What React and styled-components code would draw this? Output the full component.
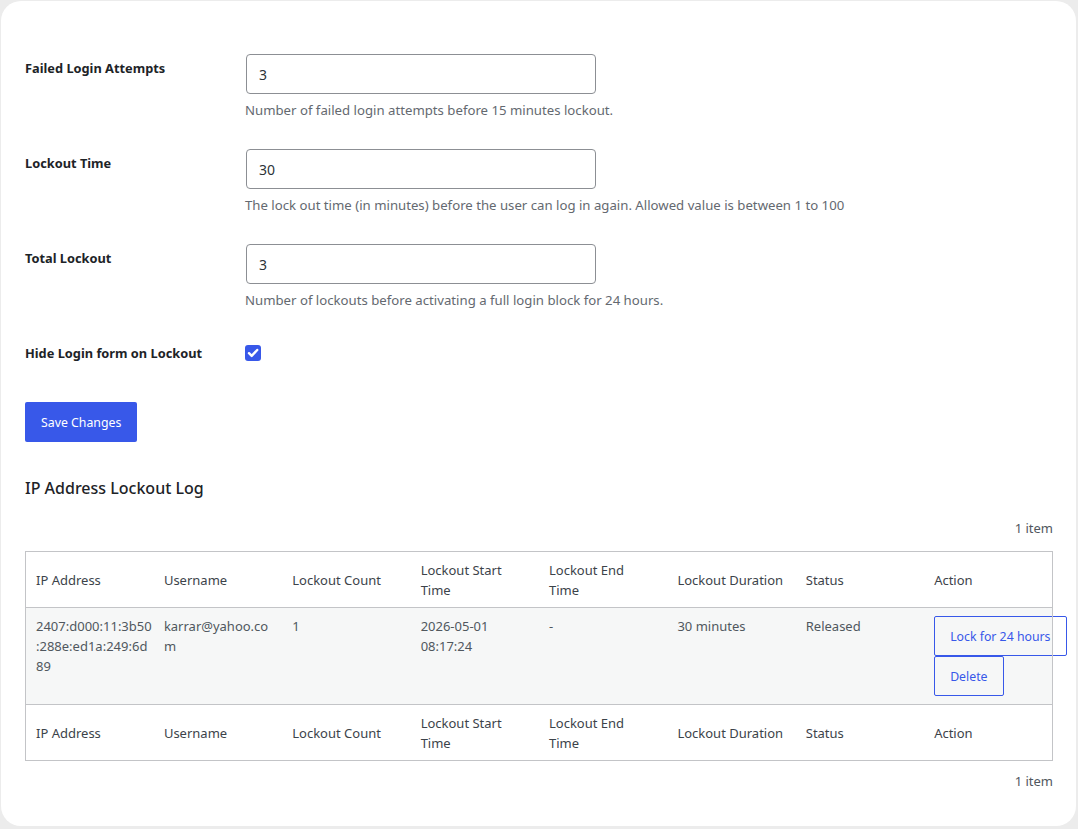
import React from 'react';
import styled, { createGlobalStyle } from 'styled-components';

const GlobalStyle = createGlobalStyle`
  html, body {
    margin: 0;
    padding: 0;
    background: #ececec;
  }
  body {
    font-family: "Noto Sans", "Open Sans", sans-serif;
    font-size: 13px;
    color: #3c434a;
  }
  * {
    box-sizing: border-box;
  }
`;

const Page = styled.div`
  padding: 1px 2px 3px 1px;
`;

const Card = styled.div`
  background: #fff;
  border-radius: 20px;
  height: 825px;
  padding: 53px 23px 0 24px;
  display: flex;
  flex-direction: column;
`;

const FieldRow = styled.div`
  display: grid;
  grid-template-columns: 221px 1fr;
  margin-bottom: ${(p) => (p.$last ? '40px' : '29px')};
`;

const Label = styled.label`
  margin-top: 6px;
  font-weight: 700;
  font-size: 12.8px;
  line-height: 17px;
  color: #1d2327;
`;

const Field = styled.div`
  display: flex;
  flex-direction: column;
  align-items: flex-start;
`;

const TextInput = styled.input`
  width: 350px;
  height: 40px;
  border: 1px solid #8c8f94;
  border-radius: 4px;
  padding: 0 12px;
  font-family: inherit;
  font-size: 14px;
  color: #2c3338;
  background: #fff;
  outline: none;
`;

const Hint = styled.p`
  margin: 6px 0 0 -1px;
  font-size: 13.2px;
  line-height: 20px;
  color: #646970;
`;

const CheckBox = styled.span`
  margin: 6px 0 0 -1px;
  width: 16px;
  height: 16px;
  border-radius: 3px;
  background: #3858e9;
  display: flex;
  align-items: center;
  justify-content: center;
`;

const PrimaryButton = styled.button`
  align-self: flex-start;
  height: 40px;
  padding: 0 16px;
  background: #3858e9;
  color: #fff;
  border: none;
  border-radius: 2px;
  font-family: inherit;
  font-size: 12.3px;
  cursor: pointer;
`;

const Heading = styled.h2`
  margin: 35px 0 0;
  font-size: 16px;
  line-height: 22px;
  font-weight: 500;
  color: #1d2327;
`;

const ItemCount = styled.div`
  text-align: right;
  line-height: 20px;
  color: #50575e;
  margin: ${(p) => (p.$bottom ? '10px 0 0' : '19px 0 13px')};
`;

const Table = styled.table`
  width: 100%;
  table-layout: fixed;
  border-collapse: collapse;
  border: 1px solid #c3c4c7;
`;

const HeadRow = styled.tr`
  border-${(p) => (p.$foot ? 'top' : 'bottom')}: 1px solid #c3c4c7;
`;

const HeadCell = styled.th`
  text-align: left;
  font-weight: 400;
  padding: 8px 10px 7px;
  line-height: 20px;
  height: 55px;
  color: #3c434a;
  vertical-align: middle;
`;

const BodyRow = styled.tr`
  background: #f6f7f7;
`;

const Cell = styled.td`
  padding: 8px 10px;
  line-height: 20px;
  color: #50575e;
  vertical-align: top;
  overflow-wrap: anywhere;
  white-space: ${(p) => (p.$pre ? 'pre' : 'normal')};
`;

const ActionButton = styled.button`
  display: block;
  height: 40px;
  padding: 0 15px;
  white-space: nowrap;
  background: transparent;
  color: #3858e9;
  border: 1px solid #3858e9;
  border-radius: 2px;
  font-family: inherit;
  font-size: 12.3px;
  cursor: pointer;
`;

const columns = [
  'IP Address',
  'Username',
  'Lockout Count',
  'Lockout Start Time',
  'Lockout End Time',
  'Lockout Duration',
  'Status',
  'Action',
];

const fields = [
  {
    label: 'Failed Login Attempts',
    value: '3',
    hint: 'Number of failed login attempts before 15 minutes lockout.',
  },
  {
    label: 'Lockout Time',
    value: '30',
    hint: 'The lock out time (in minutes) before the user can log in again. Allowed value is between 1 to 100',
  },
  {
    label: 'Total Lockout',
    value: '3',
    hint: 'Number of lockouts before activating a full login block for 24 hours.',
  },
];

function Columns({ foot }) {
  return (
    <HeadRow $foot={foot}>
      {columns.map((c) => (
        <HeadCell key={c}>{c}</HeadCell>
      ))}
    </HeadRow>
  );
}

export default function App() {
  return (
    <Page>
      <GlobalStyle />
      <Card>
        {fields.map((f) => (
          <FieldRow key={f.label}>
            <Label>{f.label}</Label>
            <Field>
              <TextInput defaultValue={f.value} />
              <Hint>{f.hint}</Hint>
            </Field>
          </FieldRow>
        ))}
        <FieldRow $last>
          <Label>Hide Login form on Lockout</Label>
          <Field>
            <CheckBox>
              <svg width="12" height="12" viewBox="0 0 12 12">
                <path
                  d="M2 6.2l2.7 2.7L10.2 3"
                  fill="none"
                  stroke="#fff"
                  strokeWidth="2.4"
                  strokeLinecap="round"
                  strokeLinejoin="round"
                />
              </svg>
            </CheckBox>
          </Field>
        </FieldRow>
        <PrimaryButton>Save Changes</PrimaryButton>
        <Heading>IP Address Lockout Log</Heading>
        <ItemCount>1 item</ItemCount>
        <Table>
          <thead>
            <Columns />
          </thead>
          <tbody>
            <BodyRow>
              <Cell $pre>{'2407:d000:11:3b50\n:288e:ed1a:249:6d\n89'}</Cell>
              <Cell>karrar@yahoo.com</Cell>
              <Cell>1</Cell>
              <Cell>2026-05-01 08:17:24</Cell>
              <Cell>-</Cell>
              <Cell>30 minutes</Cell>
              <Cell>Released</Cell>
              <Cell>
                <ActionButton>Lock for 24 hours</ActionButton>
                <ActionButton>Delete</ActionButton>
              </Cell>
            </BodyRow>
          </tbody>
          <tfoot>
            <Columns foot />
          </tfoot>
        </Table>
        <ItemCount $bottom>1 item</ItemCount>
      </Card>
    </Page>
  );
}
